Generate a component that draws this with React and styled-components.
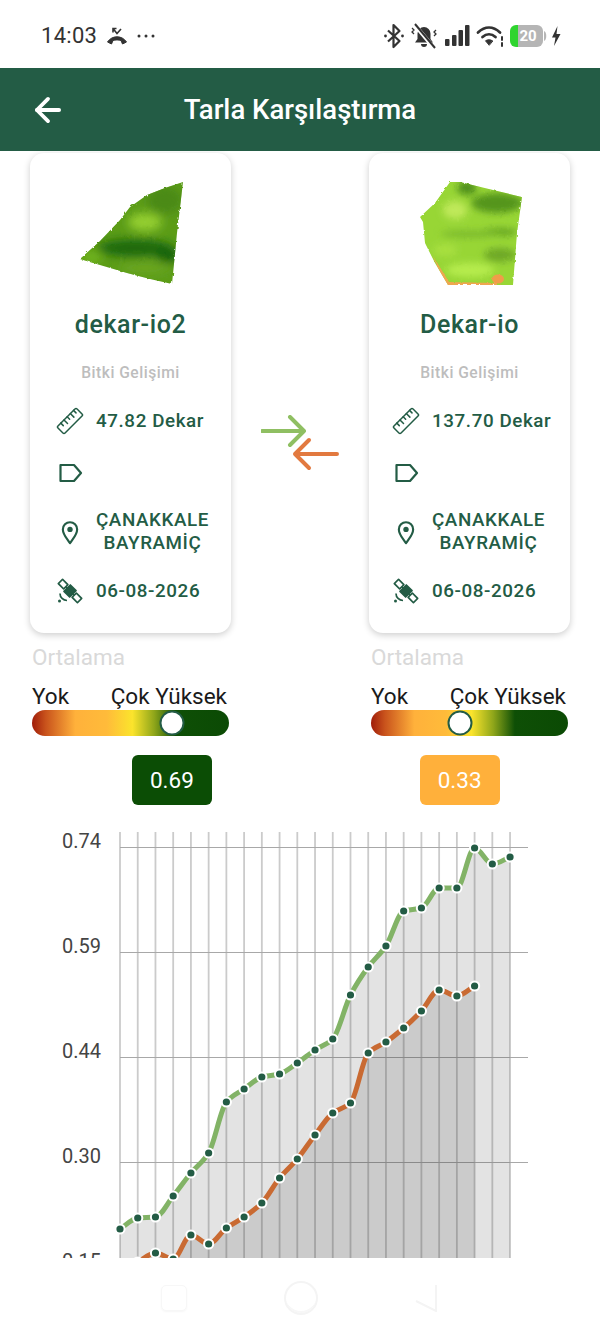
import React from "react";
import styled, { createGlobalStyle } from "styled-components";
import { ArrowLeft } from "lucide-react";

const GlobalStyle = createGlobalStyle`
	html, body {
		margin: 0;
		padding: 0;
		width: 600px;
		height: 1334px;
		overflow: hidden;
		background: #fff;
		font-family: Roboto, "Noto Sans", sans-serif;
	}
`;

const GREEN = "#235c45";

const Page = styled.div`
	width: 600px;
	height: 1334px;
	display: flex;
	flex-direction: column;
	overflow: hidden;
	background: #fff;
`;

const StatusBar = styled.div`
	height: 68px;
	box-sizing: border-box;
	padding: 3px 39px 0 41px;
	display: flex;
	align-items: center;
	justify-content: space-between;
	color: #333;
`;
const StatusGroup = styled.div`
	display: flex;
	align-items: center;
	gap: ${(p) => p.$gap || 8}px;
`;
const Clock = styled.span`
	font-size: 22px;
	letter-spacing: 0.3px;
`;
const Battery = styled.div`
	width: 33px;
	height: 22px;
	border-radius: 6px;
	background: linear-gradient(to right, #2fd42f 0 8px, #b5b5b5 8px);
	color: #fff;
	font-size: 15px;
	font-weight: 700;
	display: flex;
	align-items: center;
	justify-content: center;
	padding-left: 3px;
	box-sizing: border-box;
`;
const Bolt = styled.svg`
	margin-left: -2px;
`;

const Header = styled.header`
	height: 83px;
	background: ${GREEN};
	position: relative;
	display: flex;
	align-items: center;
	justify-content: center;
	color: #fff;
`;
const BackButton = styled.span`
	position: absolute;
	left: 29px;
	top: 23px;
	display: flex;
`;
const Title = styled.h1`
	margin: 0;
	font-size: 27.5px;
	font-weight: 500;
`;

const CompareRow = styled.div`
	display: flex;
	justify-content: space-between;
	align-items: center;
	padding: 2px 30px 0;
`;
const Card = styled.section`
	width: 201px;
	height: 480px;
	box-sizing: border-box;
	padding-top: 22px;
	background: #fff;
	border-radius: 14px;
	box-shadow: 0 2px 7px rgba(0, 0, 0, 0.2);
	display: flex;
	flex-direction: column;
	color: ${GREEN};
`;
const FieldName = styled.h2`
	margin: 20px 0 0;
	font-size: 25px;
	line-height: 30px;
	font-weight: 500;
	letter-spacing: 0.6px;
	text-align: center;
`;
const Subtitle = styled.div`
	margin-top: 24px;
	font-size: 15.6px;
	line-height: 18px;
	font-weight: 500;
	letter-spacing: 0.5px;
	text-align: center;
	color: #bdbdbd;
`;
const InfoList = styled.ul`
	list-style: none;
	margin: 16px 0 0;
	padding: 0 0 0 ${(p) => p.$indent}px;
	display: flex;
	flex-direction: column;
`;
const InfoRow = styled.li`
	height: ${(p) => p.$height}px;
	display: flex;
	align-items: center;
	gap: 12px;
	font-size: 18.8px;
	line-height: 23px;
	font-weight: 500;
	letter-spacing: 0.6px;
	text-align: center;
`;
const IconSlot = styled.span`
	width: 28px;
	display: flex;
	justify-content: center;
	flex-shrink: 0;
`;
const Swap = styled.div`
	display: flex;
	margin-top: 104px;
`;

const LegendRow = styled.div`
	display: flex;
	justify-content: space-between;
	padding: 10px 32px 0 32px;
`;
const Legend = styled.div`
	width: 197px;
	display: flex;
	flex-direction: column;
`;
const LegendTitle = styled.div`
	font-size: 22.5px;
	line-height: 28px;
	color: #d9d9d9;
`;
const LegendLabels = styled.div`
	margin-top: 12px;
	padding-right: 2px;
	display: flex;
	justify-content: space-between;
	font-size: 22.5px;
	line-height: 27px;
	color: #1a1a1a;
`;
const LegendBar = styled.div`
	height: 26px;
	border-radius: 13px;
	position: relative;
	background: linear-gradient(
		to right,
		#a01d0a 0%,
		#c9531c 7%,
		#ffb13b 22%,
		#ffbb3a 38%,
		#fbe42c 51%,
		#8fa61a 62%,
		#0e4f06 73%,
		#0b4a04 100%
	);
`;
const Thumb = styled.span`
	position: absolute;
	top: 50%;
	left: ${(p) => p.$pos}%;
	width: 25px;
	height: 25px;
	box-sizing: border-box;
	transform: translate(-50%, -50%);
	border-radius: 50%;
	background: #fff;
	border: 2px solid ${GREEN};
`;
const ValueChip = styled.div`
	width: 80px;
	height: 50px;
	margin: 19px 0 0 calc(${(p) => p.$pos}% - 40px);
	border-radius: 6px;
	background: ${(p) => p.$color};
	color: #fff;
	font-size: 22.5px;
	display: flex;
	align-items: center;
	justify-content: center;
`;

const ChartBox = styled.div`
	margin-top: 20px;
	height: 433px;
	overflow: hidden;
`;
const Chart = styled.svg`
	display: block;
`;

const NavBar = styled.nav`
	flex: 1;
	display: flex;
	justify-content: space-between;
	align-items: center;
	padding: 4px 163px 0 161px;
	background: #fff;
`;
const NavSquare = styled.span`
	width: 24px;
	height: 24px;
	border: 1px solid #f7f7f7;
	border-radius: 5px;
	box-shadow: 0 1px 2px rgba(0, 0, 0, 0.04);
`;
const NavCircle = styled.span`
	width: 30px;
	height: 30px;
	border-radius: 50%;
	border: 2px solid #f4f4f4;
	box-shadow: inset 0 -3px 0 -1px #f7f7f7;
`;

const greenSeries = [1229, 1218, 1217, 1196, 1173, 1153, 1102, 1089, 1077, 1074, 1063, 1050, 1039, 995, 967, 946, 911, 908, 888, 888, 848, 864, 857];
const orangeSeries = [1272, 1262, 1253, 1259, 1235, 1244, 1228, 1217, 1203, 1178, 1159, 1135, 1113, 1103, 1053, 1042, 1028, 1011, 990, 996, 986];

const X0 = 120;
const STEP = 17.73;

const toPoints = (ys) => ys.map((y, i) => [X0 + i * STEP, y]);

// monotone cubic curve through the points
const curve = (pts) => {
	const n = pts.length;
	const slopes = [];
	for (let i = 0; i < n - 1; i++) {
		slopes.push((pts[i + 1][1] - pts[i][1]) / (pts[i + 1][0] - pts[i][0]));
	}
	const tangents = pts.map((_, i) => {
		if (i === 0) return slopes[0];
		if (i === n - 1) return slopes[n - 2];
		if (slopes[i - 1] * slopes[i] <= 0) return 0;
		return (2 * slopes[i - 1] * slopes[i]) / (slopes[i - 1] + slopes[i]);
	});
	let d = `M${pts[0][0]} ${pts[0][1]}`;
	for (let i = 0; i < n - 1; i++) {
		const h = (pts[i + 1][0] - pts[i][0]) / 3;
		d += ` C${pts[i][0] + h} ${pts[i][1] + tangents[i] * h} ${pts[i + 1][0] - h} ${pts[i + 1][1] - tangents[i + 1] * h} ${pts[i + 1][0]} ${pts[i + 1][1]}`;
	}
	return d;
};

const Series = ({ ys, color }) => {
	const pts = toPoints(ys);
	const line = curve(pts);
	const lastX = pts[pts.length - 1][0];
	return (
		<g>
			<path d={`${line} L${lastX} 1267 L${X0} 1267 Z`} fill="rgba(60,60,60,0.14)" />
			<path d={line} fill="none" stroke={color} strokeWidth="5" />
			{pts.map(([x, y]) => (
				<circle key={x} cx={x} cy={y} r="4.6" fill={GREEN} stroke="#fff" strokeWidth="2" />
			))}
		</g>
	);
};

const YieldChart = () => {
	const verticals = Array.from({ length: 23 }, (_, i) => X0 + i * STEP);
	const rows = [
		{ y: 847.5, label: "0.74" },
		{ y: 952.5, label: "0.59" },
		{ y: 1057.5, label: "0.44" },
		{ y: 1162.5, label: "0.30" },
		{ y: 1267, label: "0.15" },
	];
	return (
		<Chart width="600" height="433" viewBox="0 825 600 433">
			{verticals.map((x) => (
				<line key={x} x1={x} x2={x} y1="832" y2="1267" stroke="#cbcbcb" strokeWidth="1.8" />
			))}
			{rows.map((r) => (
				<g key={r.label}>
					<line x1="120" x2="528" y1={r.y} y2={r.y} stroke="#a8a8a8" strokeWidth="1" />
					<text x="101" y={r.y} fontFamily="Roboto, sans-serif" fontSize="20" fill="#444" textAnchor="end" transform="translate(0 0.5)">
						{r.label}
					</text>
				</g>
			))}
			<Series ys={greenSeries} color="#82b366" />
			<Series ys={orangeSeries} color="#c96a32" />
		</Chart>
	);
};

// roughens the outline of a field so it looks like a cut out satellite image
const Rough = ({ id }) => (
	<filter id={id} x="-10%" y="-10%" width="120%" height="120%">
		<feTurbulence type="fractalNoise" baseFrequency="0.3" numOctaves="1" seed="4" />
		<feDisplacementMap in="SourceGraphic" scale="3" />
	</filter>
);

const LeftField = () => (
	<svg width="201" height="115" viewBox="30 175 201 115">
		<defs>
			<clipPath id="leftClip">
				<path d="M80 259 L100 241 L120 220 L130 207 L147 195 L165 188 L183 182 L177 233 L172 284 L150 279 L127 273 L100 265 Z" />
			</clipPath>
			<filter id="leftBlur" x="-50%" y="-50%" width="200%" height="200%">
				<feGaussianBlur stdDeviation="5" />
			</filter>
			<Rough id="leftRough" />
		</defs>
		<g filter="url(#leftRough)">
			<g clipPath="url(#leftClip)">
				<rect x="70" y="175" width="125" height="115" fill="#5b9c18" />
				<g filter="url(#leftBlur)">
					<ellipse cx="165" cy="200" rx="18" ry="14" fill="#4c8a18" />
					<ellipse cx="145" cy="222" rx="17" ry="9" fill="#94cf30" />
					<ellipse cx="135" cy="248" rx="38" ry="9" fill="#1c690f" />
					<ellipse cx="168" cy="255" rx="12" ry="8" fill="#176408" />
					<ellipse cx="145" cy="268" rx="26" ry="6" fill="#6ba622" />
					<ellipse cx="92" cy="257" rx="10" ry="6" fill="#72b61a" />
				</g>
			</g>
		</g>
	</svg>
);

const RightField = () => (
	<svg width="201" height="115" viewBox="369 175 201 115">
		<defs>
			<clipPath id="rightClip">
				<path d="M420 217 L435 203 L450 182 L460 182 L493 190 L522 197 L517 233 L513 285 L448 285 L435 263 L425 243 L423 222 Z" />
			</clipPath>
			<filter id="rightBlur" x="-50%" y="-50%" width="200%" height="200%">
				<feGaussianBlur stdDeviation="3.5" />
			</filter>
			<Rough id="rightRough" />
		</defs>
		<g filter="url(#rightRough)">
			<g clipPath="url(#rightClip)">
				<rect x="410" y="175" width="125" height="115" fill="#98d636" />
				<g filter="url(#rightBlur)">
					<ellipse cx="497" cy="203" rx="26" ry="10" fill="#55951e" />
					<ellipse cx="467" cy="188" rx="10" ry="7" fill="#4f8f1c" />
					<ellipse cx="500" cy="232" rx="18" ry="4" fill="#66a624" />
					<ellipse cx="455" cy="210" rx="12" ry="9" fill="#bfe95a" />
					<ellipse cx="470" cy="234" rx="30" ry="3.5" fill="#7ab92a" />
					<ellipse cx="500" cy="255" rx="16" ry="7" fill="#6ea826" />
					<ellipse cx="470" cy="270" rx="24" ry="7" fill="#b6ec4e" />
					<ellipse cx="445" cy="250" rx="12" ry="6" fill="#a8e040" />
				</g>
				<ellipse cx="498" cy="279" rx="6" ry="4.5" fill="#f09d4a" />
				<path d="M433 256 L449 282 L497 283 L497 286 L446 286 Z" fill="#efa650" />
			</g>
		</g>
	</svg>
);

const RulerIcon = () => (
	<svg width="28" height="28" viewBox="0 0 28 28" fill="none" stroke={GREEN} strokeWidth="1.5" strokeLinejoin="round" strokeLinecap="round">
		<g transform="rotate(-45 14 14)">
			<rect x="0.5" y="9" width="27" height="10" rx="1.5" />
			<path d="M6 9v3.5M10.5 9v5M15 9v3.5M19.5 9v5M24 9v3.5" />
		</g>
	</svg>
);
const TagIcon = () => (
	<svg width="26" height="22" viewBox="0 0 26 22" fill="none" stroke={GREEN} strokeWidth="2.2" strokeLinejoin="round">
		<path d="M3.5 3H17L24 11L17 19H3.5Z" />
	</svg>
);
const PinIcon = () => (
	<svg width="20" height="25" viewBox="0 0 22 28" fill="none" stroke={GREEN} strokeWidth="2.4">
		<path d="M11 26C7 20 3 16 3 10.5A8 8 0 0 1 19 10.5C19 16 15 20 11 26Z" strokeLinejoin="round" />
		<circle cx="11" cy="10.5" r="3" fill={GREEN} stroke="none" />
	</svg>
);
const SatelliteIcon = () => (
	<svg width="28" height="30" viewBox="0 0 28 30" fill="none" stroke={GREEN} strokeWidth="1.7" strokeLinejoin="round">
		<g transform="rotate(-45 14 15)">
			<rect x="9.5" y="11" width="9" height="8" fill={GREEN} />
			<rect x="11" y="1.5" width="6" height="7.5" />
			<rect x="11" y="21" width="6" height="7.5" />
			<path d="M14 9v2M14 19v2" />
		</g>
		<path d="M4 17.5a7 7 0 0 0 7 7" />
		<circle cx="3.5" cy="25" r="1.5" fill={GREEN} stroke="none" />
	</svg>
);

const SwapArrows = () => (
	<Swap>
		<svg width="78" height="60" viewBox="0 0 78 60" fill="none" strokeWidth="4" strokeLinecap="round" strokeLinejoin="round">
			<path d="M1 16H43M29 2L43 16L29 30" stroke="#8fbf62" />
			<path d="M76 39H34M48 25L34 39L48 53" stroke="#e2793f" />
		</svg>
	</Swap>
);

const FieldCard = ({ field, name, area, indent }) => (
	<Card>
		{field}
		<FieldName>{name}</FieldName>
		<Subtitle>Bitki Gelişimi</Subtitle>
		<InfoList $indent={indent}>
			<InfoRow $height={46}>
				<IconSlot><RulerIcon /></IconSlot>
				{area}
			</InfoRow>
			<InfoRow $height={58}>
				<IconSlot><TagIcon /></IconSlot>
			</InfoRow>
			<InfoRow $height={60}>
				<IconSlot><PinIcon /></IconSlot>
				<span>ÇANAKKALE<br />BAYRAMİÇ</span>
			</InfoRow>
			<InfoRow $height={58}>
				<IconSlot><SatelliteIcon /></IconSlot>
				06-08-2026
			</InfoRow>
		</InfoList>
	</Card>
);

const LegendBlock = ({ pos, value, color }) => (
	<Legend>
		<LegendTitle>Ortalama</LegendTitle>
		<LegendLabels>
			<span>Yok</span>
			<span>Çok Yüksek</span>
		</LegendLabels>
		<LegendBar>
			<Thumb $pos={pos} />
		</LegendBar>
		<ValueChip $color={color} $pos={pos}>{value}</ValueChip>
	</Legend>
);

const StatusIcons = () => (
	<StatusGroup $gap={6}>
		<svg width="20" height="26" viewBox="1 0 20 26" fill="none" stroke="#333" strokeWidth="2.2">
			<path d="M5 7.5L16.5 18L10.5 24V2L16.5 8L5 18.5" strokeLinejoin="round" />
			<circle cx="2.5" cy="13" r="1.4" fill="#333" stroke="none" />
			<circle cx="19.5" cy="13" r="1.4" fill="#333" stroke="none" />
		</svg>
		<svg width="28" height="26" viewBox="0 0 28 26" fill="#333">
			<path d="M14 4a6.5 6.5 0 0 0-6.5 6.5V16L5 19.5H23L20.5 16V10.5A6.5 6.5 0 0 0 14 4Z" />
			<path d="M11 21h6a3 3 0 0 1-6 0Z" />
			<path d="M4 1L24 25" stroke="#fff" strokeWidth="4" />
			<path d="M5 1L25 25" stroke="#333" strokeWidth="2" />
			<path d="M2 5l2 2-2 2 2 2M26 7l-2 2 2 2-2 2" fill="none" stroke="#333" strokeWidth="1.3" />
		</svg>
		<svg width="26" height="24" viewBox="0 0 26 24" fill="#333">
			<rect x="1" y="15" width="4.5" height="7" rx="1" />
			<rect x="8" y="11" width="4.5" height="11" rx="1" />
			<rect x="14.5" y="6" width="4.5" height="16" rx="1" />
			<rect x="21" y="1" width="4.5" height="21" rx="1" />
		</svg>
		<svg width="28" height="24" viewBox="0 0 28 24" fill="none" stroke="#333" strokeWidth="2.8" strokeLinecap="round">
			<path d="M2 8.5C9 2 17 2 24 8.5" />
			<path d="M6.5 13C10.5 9.5 15.5 9.5 19.5 13" />
			<path d="M13 21L9.5 16.8C11.5 15.4 14.5 15.4 16.5 16.8Z" fill="#333" strokeWidth="1" strokeLinejoin="round" />
			<path d="M26 13v3M26 19v3" strokeWidth="2" />
		</svg>
		<StatusGroup $gap={1}>
			<Battery>20</Battery>
			<svg width="3" height="10" viewBox="0 0 3 10"><path d="M0 0C3 1 3 9 0 10Z" fill="#b5b5b5" /></svg>
		</StatusGroup>
		<Bolt width="10" height="20" viewBox="0 0 10 20" fill="#333">
			<path d="M6.5 0L1 11.5H4.5L3 20L9.5 8H5.5Z" />
		</Bolt>
	</StatusGroup>
);

const App = () => (
	<Page>
		<GlobalStyle />
		<StatusBar>
			<StatusGroup $gap={9}>
				<Clock>14:03</Clock>
				<svg width="22" height="20" viewBox="0 0 22 20" fill="none" stroke="#333">
					<path d="M1.5 16C6 9 16 9 20.5 16L16.5 18L15 14.5C13 13.7 9 13.7 7 14.5L5.5 18Z" fill="#333" strokeLinejoin="round" />
					<path d="M7 2.5L11 7.5L15 3M7 6.5V2.5H10.5" strokeWidth="1.6" />
				</svg>
				<svg width="18" height="4" viewBox="0 0 18 4" fill="#333">
					<circle cx="2" cy="2" r="1.5" />
					<circle cx="9" cy="2" r="1.5" />
					<circle cx="16" cy="2" r="1.5" />
				</svg>
			</StatusGroup>
			<StatusIcons />
		</StatusBar>
		<Header>
			<BackButton><ArrowLeft size={38} strokeWidth={2.4} /></BackButton>
			<Title>Tarla Karşılaştırma</Title>
		</Header>
		<CompareRow>
			<FieldCard field={<LeftField />} name="dekar-io2" area="47.82 Dekar" indent={26} />
			<SwapArrows />
			<FieldCard field={<RightField />} name="Dekar-io" area="137.70 Dekar" indent={23} />
		</CompareRow>
		<LegendRow>
			<LegendBlock pos={71} value="0.69" color="#0b4d05" />
			<LegendBlock pos={45} value="0.33" color="#ffb03b" />
		</LegendRow>
		<ChartBox>
			<YieldChart />
		</ChartBox>
		<NavBar>
			<NavSquare />
			<NavCircle />
			<svg width="22" height="28" viewBox="0 0 22 28" fill="none" stroke="#f4f4f4" strokeWidth="2">
				<path d="M1 17L21 27V1" />
			</svg>
		</NavBar>
	</Page>
);

export default App;
